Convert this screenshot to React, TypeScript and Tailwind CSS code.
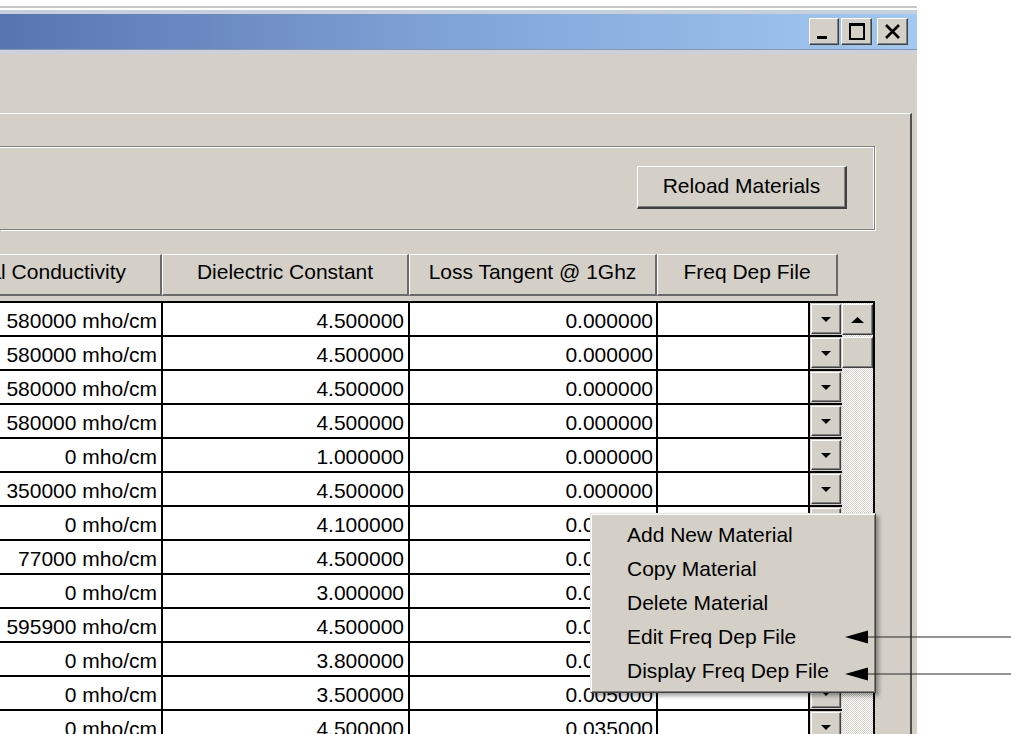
import React from "react";

const raised =
  "bg-[#d4d0c8] border border-t-white border-l-white border-r-[#404040] border-b-[#404040] shadow-[inset_-1px_-1px_0_#808080]";

const rows: [string, string, string][] = [
  ["580000 mho/cm", "4.500000", "0.000000"],
  ["580000 mho/cm", "4.500000", "0.000000"],
  ["580000 mho/cm", "4.500000", "0.000000"],
  ["580000 mho/cm", "4.500000", "0.000000"],
  ["0 mho/cm", "1.000000", "0.000000"],
  ["350000 mho/cm", "4.500000", "0.000000"],
  ["0 mho/cm", "4.100000", "0.020000"],
  ["77000 mho/cm", "4.500000", "0.020000"],
  ["0 mho/cm", "3.000000", "0.020000"],
  ["595900 mho/cm", "4.500000", "0.020000"],
  ["0 mho/cm", "3.800000", "0.020000"],
  ["0 mho/cm", "3.500000", "0.005000"],
  ["0 mho/cm", "4.500000", "0.035000"],
];

function DownArrow() {
  return (
    <svg width="10" height="5" viewBox="0 0 10 5">
      <polygon points="0,0 10,0 5,5" fill="#000" />
    </svg>
  );
}

function MenuItem({ label }: { label: string }) {
  return (
    <div className="h-[34px] flex items-center pl-[36px] text-[21px] text-black whitespace-nowrap">
      {label}
    </div>
  );
}

export default function App() {
  return (
    <div className="relative w-[1011px] h-[734px] overflow-hidden bg-white font-['Liberation_Sans',Arial,sans-serif] text-black">
      <div className="h-[6px]" />
      <div className="h-[2px] w-[917px] bg-[#c8c8c8]" />
      <div className="h-[2px]" />
      {/* Window */}
      <div className="w-[917px] h-[724px] flex flex-col bg-[#d4d0c8]">
        <div className="h-[4px] bg-[#c8cfdc]" />
        {/* Title bar */}
        <div className="h-[36px] flex items-center justify-end pr-[9px] bg-[linear-gradient(to_right,#5874b0,#81a4d8_50%,#a2c9f1)] border-b border-b-[#8796b3]">
          <div className="flex items-center">
            <div className={`${raised} w-[30px] h-[27px] flex items-end pl-[7px] pb-[5px]`}>
              <div className="w-[10px] h-[3px] bg-black" />
            </div>
            <div className={`${raised} w-[31px] h-[27px] ml-[2px] flex items-center justify-center`}>
              <div className="w-[16px] h-[17px] border-2 border-t-[3px] border-black" />
            </div>
            <div className={`${raised} w-[31px] h-[27px] ml-[5px] flex items-center justify-center`}>
              <svg width="17" height="15" viewBox="0 0 17 15">
                <path d="M2 1 L15 14 M15 1 L2 14" stroke="#000" strokeWidth="2.6" />
              </svg>
            </div>
          </div>
        </div>
        <div className="h-[4px] bg-[#cdd0d6]" />
        <div className="h-[59px]" />
        {/* Panel */}
        <div className="flex-1 w-[912px] border-t border-t-white border-r-2 border-r-[#505050] pr-[35px] pt-[32px] flex flex-col overflow-hidden">
          {/* Group box */}
          <div className="h-[84px] border border-l-0 border-[#808080] shadow-[1px_1px_0_#fff,inset_0_1px_0_#fff,inset_-1px_0_0_#fff] flex items-start justify-end pt-[19px] pr-[27px]">
            <div className={`${raised} border-r-2 border-b-2 w-[210px] h-[43px] flex items-center justify-center text-[21px] pb-[2px]`}>
              Reload Materials
            </div>
          </div>
          <div className="h-[24px]" />
          {/* Header */}
          <div className="flex h-[42px]">
            <div className="w-[162px] h-full bg-[#d4d0c8] border-t border-t-white border-r-2 border-b-2 border-r-[#6a6a6a] border-b-[#6a6a6a] flex items-center justify-end pr-[34px] pb-[6px] overflow-hidden whitespace-nowrap text-[21px]">
              Metal Conductivity
            </div>
            <div className="w-[247px] h-full bg-[#d4d0c8] border-t border-l border-t-white border-l-white border-r-2 border-b-2 border-r-[#6a6a6a] border-b-[#6a6a6a] flex items-center justify-center pb-[6px] text-[21px] whitespace-nowrap">
              Dielectric Constant
            </div>
            <div className="w-[248px] h-full bg-[#d4d0c8] border-t border-l border-t-white border-l-white border-r-2 border-b-2 border-r-[#6a6a6a] border-b-[#6a6a6a] flex items-center justify-center pb-[6px] text-[21px] whitespace-nowrap">
              Loss Tangent @ 1Ghz
            </div>
            <div className="w-[181px] h-full bg-[#d4d0c8] border-t border-l border-t-white border-l-white border-r-2 border-b-2 border-r-[#6a6a6a] border-b-[#6a6a6a] flex items-center justify-center pb-[6px] text-[21px] whitespace-nowrap">
              Freq Dep File
            </div>
          </div>
          <div className="h-[5px]" />
          {/* Grid */}
          <div className="w-[875px] flex-1 flex border-t-2 border-r-2 border-black overflow-hidden">
            <div className="w-[842px] flex flex-col">
              {rows.map((r, i) => (
                <div key={i} className="h-[34px] shrink-0 flex border-b-2 border-black">
                  <div className="w-[163px] bg-white border-r-2 border-black flex items-center justify-end pr-[4px] pt-[3px] text-[21px] whitespace-nowrap overflow-hidden">
                    {r[0]}
                  </div>
                  <div className="w-[247px] bg-white border-r-2 border-black flex items-center justify-end pr-[4px] pt-[3px] text-[21px]">
                    {r[1]}
                  </div>
                  <div className="w-[248px] bg-white border-r-2 border-black flex items-center justify-end pr-[3px] pt-[3px] text-[21px]">
                    {r[2]}
                  </div>
                  <div className="w-[152px] bg-white border-r-2 border-black" />
                  <div className="w-[32px] bg-[#d4d0c8] flex items-start pl-[1px] pt-[1px]">
                    <div className={`${raised} w-[30px] h-[30px] flex items-center justify-center`}>
                      <DownArrow />
                    </div>
                  </div>
                </div>
              ))}
            </div>
            {/* Scrollbar */}
            <div className="w-[31px] flex flex-col bg-[repeating-conic-gradient(#d4d0c8_0%_25%,#ffffff_0%_50%)] [background-size:2px_2px]">
              <div className={`${raised} h-[31px] mt-[1px] flex items-center justify-center`}>
                <svg width="13" height="6" viewBox="0 0 13 6">
                  <polygon points="0,6 13,6 6.5,0" fill="#000" />
                </svg>
              </div>
              <div className={`${raised} h-[31px] mt-[2px]`} />
            </div>
          </div>
        </div>
      </div>

      {/* Context menu */}
      <div className="absolute left-[590px] top-[513px] w-[286px] h-[180px] bg-[#d4d0c8] border border-t-[#e8e6e1] border-l-[#e8e6e1] border-r-[#404040] border-b-[#404040] shadow-[inset_1px_1px_0_#fff,inset_-1px_-1px_0_#808080,3px_3px_4px_rgba(0,0,0,0.35)] pt-[4px]">
        <MenuItem label="Add New Material" />
        <MenuItem label="Copy Material" />
        <MenuItem label="Delete Material" />
        <MenuItem label="Edit Freq Dep File" />
        <MenuItem label="Display Freq Dep File" />
      </div>

      {/* Annotation arrows */}
      <svg className="absolute left-0 top-0 pointer-events-none" width="1011" height="734" viewBox="0 0 1011 734">
        <line x1="866" y1="637" x2="1011" y2="637" stroke="#2a2a2a" strokeWidth="1.2" />
        <polygon points="845,637 868,630.5 868,643.5" fill="#000" />
        <line x1="866" y1="674" x2="1011" y2="674" stroke="#2a2a2a" strokeWidth="1.2" />
        <polygon points="845,674 868,667.5 868,680.5" fill="#000" />
      </svg>
    </div>
  );
}
